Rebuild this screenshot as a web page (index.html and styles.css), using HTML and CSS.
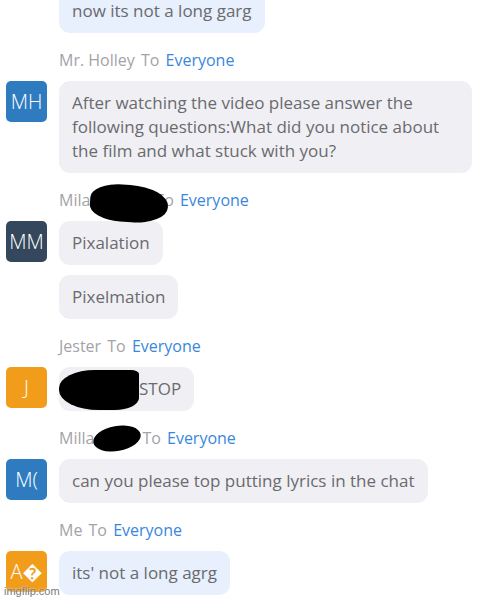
FILE: index.html
```html
<!DOCTYPE html>
<html>
<head>
<meta charset="utf-8">
<link rel="stylesheet" href="styles.css">
</head>
<body>
<div class="chat">
  <div class="row first">
    <div class="avatar-space"></div>
    <div class="bubbles"><div class="bubble me">now its not a long garg</div></div>
  </div>

  <div class="head">Mr. Holley <span class="to">To</span> <span class="who">Everyone</span></div>
  <div class="row">
    <div class="avatar blue">MH</div>
    <div class="bubbles"><div class="bubble">After watching the video please answer the following questions:What did you notice about the film and what stuck with you?</div></div>
  </div>

  <div class="head">Mila<span class="gapname"></span><span class="to">To</span> <span class="who">Everyone</span></div>
  <div class="row">
    <div class="avatar slate">MM</div>
    <div class="bubbles">
      <div class="bubble">Pixalation</div>
      <div class="bubble">Pixelmation</div>
    </div>
  </div>

  <div class="head">Jester <span class="to">To</span> <span class="who">Everyone</span></div>
  <div class="row">
    <div class="avatar orange">J</div>
    <div class="bubbles"><div class="bubble"><span class="hidden-word"></span>STOP</div></div>
  </div>

  <div class="head">Milla<span class="gapname2"></span><span class="to">To</span> <span class="who">Everyone</span></div>
  <div class="row">
    <div class="avatar blue">M(</div>
    <div class="bubbles"><div class="bubble">can you please top putting lyrics in the chat</div></div>
  </div>

  <div class="head">Me <span class="to">To</span> <span class="who">Everyone</span></div>
  <div class="row">
    <div class="avatar orange">A�</div>
    <div class="bubbles"><div class="bubble me">its' not a long agrg</div></div>
  </div>
</div>

<div class="blot blot1"></div>
<div class="blot blot2"></div>
<div class="blot blot3"></div>
<div class="watermark">imgflip.com</div>
</body>
</html>
```

FILE: styles.css
```css
html, body {
  margin: 0;
  padding: 0;
  background: #ffffff;
  width: 500px;
  height: 602px;
  overflow: hidden;
  position: relative;
  font-family: "Open Sans", "Lato", sans-serif;
}

.chat {
  padding-left: 6px;
  margin-top: -11px;
}

.row {
  display: flex;
  align-items: flex-start;
}

.avatar, .avatar-space {
  width: 41px;
  height: 41px;
  flex: 0 0 41px;
  margin-right: 12px;
}

.avatar {
  border-radius: 5px;
  color: #ffffff;
  font-size: 20px;
  font-weight: 300;
  display: flex;
  align-items: center;
  justify-content: center;
}

.blue { background: #2e7cbf; }
.slate { background: #34475c; }
.orange { background: #f19d1b; }

.bubbles {
  display: flex;
  flex-direction: column;
  align-items: flex-start;
  gap: 10px;
}

.bubble {
  background: #f0f0f4;
  border-radius: 11px;
  padding: 10px 13px;
  font-size: 17px;
  line-height: 24px;
  color: #6a6a6f;
  max-width: 387px;
}

.bubble.me {
  background: #e7f0fc;
}

.head {
  margin: 17px 0 11px 53px;
  font-size: 16px;
  line-height: 20px;
  color: #a3a3a8;
  white-space: nowrap;
}

.head .to {
  color: #a3a3a8;
  margin-left: 2px;
}

.head .who {
  color: #3a87dc;
  margin-left: 2px;
}

.gapname { display: inline-block; width: 63px; }
.gapname2 { display: inline-block; width: 46px; }

.hidden-word {
  display: inline-block;
  width: 67px;
  height: 1px;
}

.blot {
  position: absolute;
  background: #000000;
}

.blot1 {
  left: 90px;
  top: 185px;
  width: 78px;
  height: 37px;
  border-radius: 40% 50% 45% 40%;
  transform: rotate(4deg);
}

.blot2 {
  left: 59px;
  top: 370px;
  width: 80px;
  height: 40px;
  border-radius: 45% 10% 30% 50%;
}

.blot3 {
  left: 93px;
  top: 426px;
  width: 48px;
  height: 25px;
  border-radius: 50%;
  transform: rotate(-10deg);
}

.watermark {
  position: absolute;
  left: 4px;
  top: 585px;
  font-family: "Liberation Sans", Arial, sans-serif;
  font-size: 11px;
  color: #7a7a7a;
  text-shadow: 0 0 2px #ffffff;
}
```
